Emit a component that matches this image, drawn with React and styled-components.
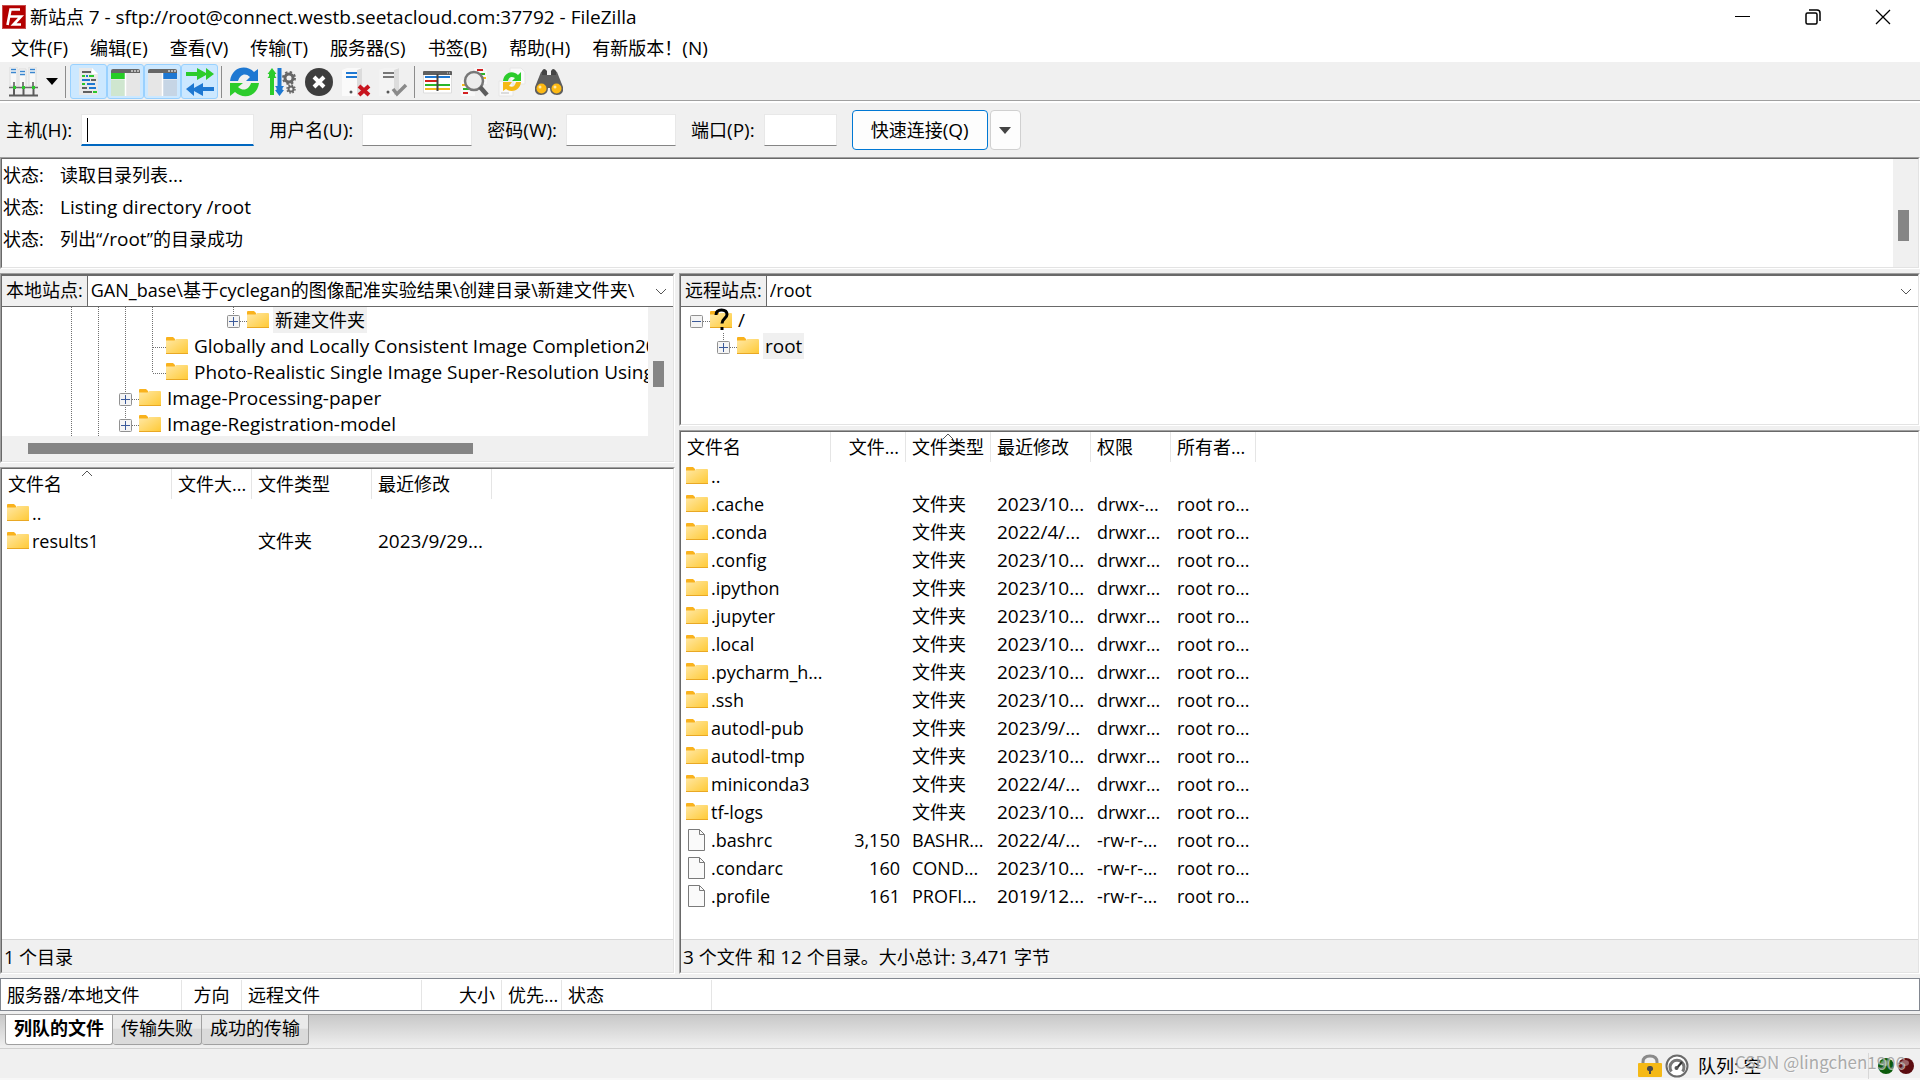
import React, { useState } from 'react';
import styled, { createGlobalStyle } from 'styled-components';

const GlobalStyle = createGlobalStyle`
  * {
    box-sizing: border-box;
  }

  body {
    margin: 0;
    background: #f0f0f0;
    color: #000;
    font-family: 'Open Sans', 'Noto Sans CJK SC', sans-serif;
    font-size: 18px;
    line-height: 26px;
  }

  button,
  input,
  select {
    margin: 0;
    padding: 0;
    border: none;
    background: none;
    color: inherit;
    font: inherit;
  }
`;

const Window = styled.div`
  display: flex;
  flex-direction: column;
  min-height: 100vh;
  overflow: hidden;
  white-space: nowrap;
`;

// Latin letters run a size larger than the Chinese around them
const Latin = styled.span`
  font-size: 19px;
  line-height: 1;
`;

/* title and menu */

const TitleBar = styled.header`
  display: flex;
  align-items: center;
  height: 34px;
  padding: 0 2px;
  background: #fff;
`;

const Title = styled.h1`
  flex: 1;
  margin: 0 0 0 4px;
  font-size: 18px;
  line-height: 26px;
  font-weight: 400;
`;

const WindowButton = styled.button`
  display: flex;
  align-items: center;
  justify-content: center;
  width: 70px;
  height: 34px;
`;

const MenuBar = styled.nav`
  display: flex;
  height: 28px;
  background: #fff;
`;

const MenuButton = styled.button`
  padding: 0 11px;
`;

/* toolbar */

const ToolBar = styled.div`
  display: flex;
  align-items: center;
  height: 41px;
  padding-left: 5px;
  border-bottom: 2px solid #fff;
  box-shadow: inset 0 -1px 0 #a0a0a0;
`;

const ToolButton = styled.button`
  display: flex;
  align-items: center;
  justify-content: center;
  width: 37px;
  height: 35px;
  border: 1px solid ${(props) => (props.$pressed ? '#99d1ff' : 'transparent')};
  border-radius: 3px;
  background: ${(props) => (props.$pressed ? '#cce8ff' : 'transparent')};
`;

const DropButton = styled.button`
  display: flex;
  align-items: center;
  justify-content: center;
  width: 20px;
  height: 35px;
`;

const ToolDivider = styled.span`
  width: 1px;
  height: 32px;
  margin: 0 4px 0 3px;
  background: #8c8c8c;
`;

/* quick connect */

const QuickConnect = styled.form`
  display: flex;
  align-items: center;
  height: 54px;
  padding-left: 6px;
`;

const Field = styled.div`
  display: flex;
  align-items: center;
  gap: 9px;
  margin-right: 15px;
`;

const TextBox = styled.input`
  width: ${(props) => props.$width}px;
  height: 32px;
  padding: 0 5px;
  border: 1px solid #e8e8e8;
  border-bottom: 1px solid #858585;
  background: #fff;
  outline: none;
`;

// The caret of the empty host box is painted as a 1px line
const HostBox = styled(TextBox)`
  border-bottom: 2px solid #0067c0;
  caret-color: transparent;

  &:placeholder-shown {
    background: linear-gradient(#000, #000) 5px center / 1px 24px no-repeat #fff;
  }
`;

const ConnectButton = styled.button`
  width: 136px;
  height: 40px;
  border: 1px solid #0078d4;
  border-radius: 4px;
  background: #fdfdfd;
`;

const HistoryButton = styled.button`
  display: flex;
  align-items: center;
  justify-content: center;
  width: 31px;
  height: 40px;
  margin-left: 2px;
  border: 1px solid #d0d0d0;
  border-radius: 4px;
  background: #fdfdfd;
`;

/* sunken frame that holds each pane */

const Frame = styled.section`
  display: flex;
  flex-direction: column;
  flex: ${(props) => (props.$height ? 'none' : '1')};
  height: ${(props) => (props.$height ? `${props.$height}px` : 'auto')};
  min-width: 0;
  border: 1px solid;
  border-color: #a0a0a0 #fff #fff #a0a0a0;
`;

const FrameInner = styled.div`
  display: flex;
  flex-direction: column;
  flex: 1;
  min-width: 0;
  min-height: 0;
  border: 1px solid;
  border-color: #696969 #e3e3e3 #e3e3e3 #696969;
  background: #fff;
`;

const ScrollRow = styled.div`
  display: flex;
  flex: 1;
  min-height: 0;
`;

const VerticalTrack = styled.div`
  display: flex;
  justify-content: center;
  flex: none;
  width: 25px;
  padding-top: ${(props) => props.$top}px;
  padding-right: 4px;
  background: #f0f0f0;
`;

const VerticalThumb = styled.div`
  width: 11px;
  height: ${(props) => props.$size}px;
  background: #858585;
`;

const HorizontalTrack = styled.div`
  display: flex;
  align-items: center;
  height: 25px;
  padding-left: 26px;
  background: #f0f0f0;
`;

const HorizontalThumb = styled.div`
  width: 69%;
  height: 11px;
  background: #858585;
`;

const LogList = styled.ul`
  flex: 1;
  margin: 0;
  padding: 0 0 0 1px;
  list-style: none;
`;

const LogLine = styled.li`
  display: grid;
  grid-template-columns: 57px 1fr;
  line-height: 32px;
`;

/* panes */

const Panes = styled.main`
  display: grid;
  grid-template-columns: 675fr 1241fr;
  gap: 4px;
  flex: 1;
  padding: 4px 0;
`;

const Pane = styled.div`
  display: flex;
  flex-direction: column;
  gap: 4px;
  min-width: 0;
`;

const SiteBar = styled.div`
  position: relative;
  display: flex;
  height: 32px;
  border-top: 1px solid #696969;
  border-bottom: 1px solid #696969;
`;

const SiteLabel = styled.label`
  padding: 0 4px;
  border-right: 1px solid #696969;
  background: #f0f0f0;
  line-height: 28px;
`;

const SiteSelect = styled.select`
  flex: 1;
  min-width: 0;
  padding: 0 28px 2px 3px;
  appearance: none;
  outline: none;
`;

const Chevron = styled.svg`
  position: absolute;
  right: 6px;
  top: 12px;
  pointer-events: none;
`;

const Tree = styled.ul`
  flex: 1;
  min-width: 0;
  margin: 0;
  padding: 0 0 0 ${(props) => props.$indent}px;
  overflow: hidden;
  list-style: none;
`;

const TreeRow = styled.li`
  display: flex;
  align-items: center;
  height: 26px;

  svg {
    flex: none;
  }
`;

const TreeName = styled.span`
  margin-left: 4px;
  padding: 0 2px;
  background: ${(props) => (props.$selected ? '#f0f0f0' : 'transparent')};
`;

const ListArea = styled.div`
  flex: 1;
`;

const FileTable = styled.table`
  border-collapse: separate;
  border-spacing: 0;
  table-layout: fixed;
  width: ${(props) => props.$width}px;
`;

const HeadCell = styled.th`
  position: relative;
  height: 30px;
  padding: 0 6px;
  border-right: 1px solid #e5e5e5;
  font-weight: 400;
  text-align: ${(props) => props.$align || 'left'};
`;

const SortMark = styled.svg`
  position: absolute;
  left: 50%;
  top: 1px;
  margin-left: -6px;
`;

const Cell = styled.td`
  height: 28px;
  padding: 0 6px;
  overflow: hidden;
  text-align: ${(props) => props.$align || 'left'};
`;

const NameCell = styled.td`
  height: 28px;
  padding: 0 0 0 5px;
`;

const FileName = styled.div`
  display: flex;
  align-items: center;
  gap: 3px;
`;

const PaneStatus = styled.footer`
  height: 33px;
  padding-left: 2px;
  border-top: 1px solid #d7d7d7;
  background: #f0f0f0;
  line-height: 34px;
`;

/* queue */

const Queue = styled.section`
  height: 33px;
  padding-top: 1px;
  border: 1px solid #828790;
  background: #fff;
`;

const Tabs = styled.div`
  display: flex;
  align-items: flex-start;
  height: 35px;
  margin-top: 3px;
  padding-left: 5px;
  border-top: 1px solid #a0a0a0;
  border-bottom: 1px solid #d0d0d0;
  background: linear-gradient(#c8c8c8, #f0f0f0);
`;

const Tab = styled.button`
  height: 30px;
  padding: 0 8px 4px;
  border: 1px solid #a0a0a0;
  border-top: none;
  border-left: ${(props) => (props.$active ? '1px solid #a0a0a0' : 'none')};
  border-radius: 0 0 3px 3px;
  background: ${(props) => (props.$active ? '#fff' : 'linear-gradient(#eaeaea 45%, #dadada 50%)')};
  font-weight: ${(props) => (props.$active ? 700 : 400)};
`;

const StatusBar = styled.footer`
  position: relative;
  display: flex;
  align-items: center;
  justify-content: flex-end;
  gap: 3px;
  height: 31px;
  padding: 4px 6px 0 0;
  border-bottom: 2px solid #f7f7f7;
`;

const QueueText = styled.span`
  width: 171px;
  margin-left: 6px;
  border-right: 1px solid #d7d7d7;
`;

const Lights = styled.span`
  display: flex;
  gap: 4px;
  margin-left: 6px;
`;

const Watermark = styled.span`
  position: absolute;
  right: 15px;
  top: 0;
  color: rgba(150, 150, 150, 0.8);
  font-family: 'Noto Sans CJK SC', sans-serif;
  font-size: 17px;
  text-shadow: 1px 1px 0 rgba(255, 255, 255, 0.6);
`;

/* icons */

const FileZillaLogo = () => (
  <svg width="24" height="24" viewBox="0 0 24 24">
    <rect width="24" height="24" fill="#b30000" />
    <rect x="0.5" y="0.5" width="23" height="23" fill="none" stroke="#fff" strokeOpacity="0.6" strokeDasharray="1 1" />
    <path d="M5.500 20 8.500 4.500H18M7.500 11.500h5M12 11.500h7l-7.500 8H19" fill="none" stroke="#fff" strokeWidth="2.600" />
  </svg>
);

const FolderIcon = ({ unknown }) => (
  <svg width="22" height="26" viewBox="0 0 22 26">
    <defs>
      <linearGradient id="folder" x1="0" y1="0" x2="1" y2="1">
        <stop offset="0" stopColor="#ffe8a6" />
        <stop offset="1" stopColor="#ffc933" />
      </linearGradient>
    </defs>
    <path d="M0 5q0-1 1-1h6l2 2v3H0z" fill="#f9b21d" />
    <path d="M0 7.500h8.500L10 6h11q1 0 1 1v14H0z" fill="url(#folder)" />
    <path d="M0 20.500h22" stroke="#e9a824" />
    {unknown && (
      <g>
        <path d="M6 8q0-5 5.500-5T17 7.500c0 4-5 4-5 9" fill="none" stroke="#000" strokeWidth="3" />
        <path d="M10.500 20h3v3h-3z" />
      </g>
    )}
  </svg>
);

const FileIcon = () => (
  <svg width="22" height="26" viewBox="0 0 22 26">
    <path d="M2.500 2.500h11l5 5v16h-16z" fill="#fafafa" stroke="#7a7a7a" />
    <path d="M13.500 2.500v5h5" fill="none" stroke="#7a7a7a" />
  </svg>
);

// One 27px step of the tree: blank, line, tee, elbow, plus, plusLast, minus
const Guide = ({ kind }) => {
  const box = kind === 'plus' || kind === 'plusLast' || kind === 'minus';
  const down = kind === 'line' || kind === 'tee' || kind === 'plus';
  return (
    <svg width="27" height="26" viewBox="0 0 27 26">
      {kind !== 'blank' && (
        <g stroke="#707070" strokeDasharray="1 1" fill="none">
          {kind !== 'minus' && <path d={down ? 'M13.500 0v26' : 'M13.500 0v14'} />}
          {kind !== 'line' && <path d="M14 14.500h13" />}
        </g>
      )}
      {box && (
        <g>
          <rect x="7.500" y="8.500" width="12" height="12" rx="1" fill="#f4f4f4" stroke="#919191" />
          <path d={kind === 'minus' ? 'M9 14.500h9' : 'M9 14.500h9M13.500 10v9'} stroke="#3b5a9a" />
        </g>
      )}
    </svg>
  );
};

const SitesIcon = () => (
  <svg width="30" height="30" viewBox="0 0 30 30">
    {[1, 10, 20].map((x, i) => (
      <g key={x}>
        <path d={`M${x} ${i === 1 ? 2 : 0}h7v19h-7z`} fill="#f8f8f8" stroke="#dcdcdc" />
        <path d={`M${x + 1} ${i === 1 ? 4.5 : 2.5}h5M${x + 1} ${i === 1 ? 7.5 : 5.5}h5`} stroke="#3a86cf" strokeWidth="1.500" />
        <path d={`M${x + 4} 15v5`} stroke="#555" strokeWidth="1.500" />
      </g>
    ))}
    <path d="M0 20.500h29" stroke="#6b6b6b" strokeWidth="1.500" />
    <path d="M4 20.500h3M13 20.500h3M23 20.500h3" stroke="#2bc72b" strokeWidth="3" />
    <path d="M0 28.500h29M5 22v6M14.500 22v6M24.500 22v6" stroke="#5c5c5c" strokeWidth="2" />
  </svg>
);

const LogIcon = () => (
  <svg width="29" height="29" viewBox="0 0 29 29">
    <path d="M5 1h13l6 6v21H5z" fill="#e9e9e9" />
    <path d="M18 1v6h6z" fill="#fff" />
    <g strokeWidth="2" fill="none">
      <path d="M8 5h9M17 13h5M8 21h5M9 25h9" stroke="#606060" />
      <path d="M8 9h3M15 9h5M8 17h3" stroke="#2bc72b" />
      <path d="M12 9h2M8 13h8M13 17h8M15 21h7" stroke="#1e78d2" />
      <path d="M19 25h4" stroke="#2bc72b" />
    </g>
  </svg>
);

const PaneIcon = ({ side }) => (
  <svg width="30" height="28" viewBox="0 0 30 28">
    <path d="M0 1h29v27H0z" fill="#e6e6e6" />
    <path d="M0 5V3q0-2 2-2h25q2 0 2 2v2z" fill="#666" />
    <path d="M20 3h2M23 3h2M26 3h2" stroke="#d5d5d5" strokeWidth="1.500" />
    {side === 'left' ? (
      <g>
        <path d="M0 5h14v6H0z" fill="#26cc26" />
        <path d="M0 12h14v16H0z" fill="#cfe6cf" />
      </g>
    ) : (
      <g>
        <path d="M15 5h14v6H15z" fill="#1e78d2" />
        <path d="M15 12h14v16H15z" fill="#c6d5e5" />
      </g>
    )}
    <path d="M14.500 5v23" stroke="#fff" strokeWidth="1.500" />
  </svg>
);

const TransferIcon = () => (
  <svg width="30" height="30" viewBox="0 0 30 30">
    <path d="M1 5h11V1l9 5V1l8 6-8 6V8l-9 5V9H1z" fill="#2ccc2c" />
    <path d="M29 20H18v-4l-9 5v-5l-8 6 8 7v-5l9 5v-5h11z" fill="#1e78d2" />
  </svg>
);

const RefreshIcon = () => (
  <svg width="31" height="30" viewBox="0 0 31 30">
    <path d="M1 14C3-1 18-3 25 5l4-3v12H17l4-4C16 5 11 8 9 14z" fill="#1e78d2" />
    <path d="M30 16c-2 15-17 16-24 9l-5 4V16h13l-5 4c6 5 11 2 13-4z" fill="#2ccc2c" />
  </svg>
);

const FilterIcon = () => (
  <svg width="30" height="30" viewBox="0 0 30 30">
    <path d="M5 1l4.500 6H8v2l1.500 2H7v17H3V11H.5L2 9V7H.5z" fill="#2ccc2c" />
    <path d="M12.500 29L8 23h1.500v-2L8 19h2.500V1h4v18H17l-1.500 2v2H17z" fill="#1e78d2" />
    <circle cx="22" cy="11" r="4" fill="none" stroke="#666" strokeWidth="3" />
    <circle cx="22" cy="11" r="6" fill="none" stroke="#666" strokeWidth="2" strokeDasharray="2.400 2.312" />
    <circle cx="24" cy="22" r="2.500" fill="none" stroke="#666" strokeWidth="2" />
    <circle cx="24" cy="22" r="4" fill="none" stroke="#666" strokeWidth="1.500" strokeDasharray="1.600 1.542" />
  </svg>
);

const CancelIcon = () => (
  <svg width="30" height="30" viewBox="0 0 30 30">
    <circle cx="15" cy="15" r="14" fill="#3e3e3e" />
    <path d="M10 10l10 10M20 10L10 20" stroke="#fff" strokeWidth="4" />
  </svg>
);

const ServerIcon = ({ mark }) => (
  <svg width="30" height="30" viewBox="0 0 30 30">
    <path d="M15 3l6-2v24l-6 4z" fill="#dcdcdc" />
    <path d="M1 3l5-2h15l-5 2v26H1z" fill={mark === 'cross' ? '#fafafa' : '#f3f3f3'} />
    <path d="M5 6h11M5 10h11" stroke={mark === 'cross' ? '#1e78d2' : '#777'} strokeWidth="2" />
    <circle cx="10" cy="25" r="1.500" fill="#555" />
    {mark === 'cross' ? (
      <path d="M18 19l10 9M28 19l-10 9" stroke="#c8141e" strokeWidth="4" />
    ) : (
      <path d="M15 22l4 5 9-9" fill="none" stroke="#8a8a8a" strokeWidth="3.500" />
    )}
  </svg>
);

const CompareIcon = () => (
  <svg width="29" height="28" viewBox="0 0 29 28">
    <path d="M0.500 5h28v20h-28z" fill="#fff" stroke="#ddd" />
    <path d="M0 7V4q0-1 1-1h27q1 0 1 1v3z" fill="#606060" />
    <path d="M24 5h1M26 5h1" stroke="#d5d5d5" />
    <g strokeWidth="2">
      <path d="M2 9h25" stroke="#1e78d2" />
      <path d="M2 13h12" stroke="#d42020" />
      <path d="M2 17h25" stroke="#2bb52b" />
      <path d="M2 21h25" stroke="#f4b81c" />
    </g>
    <path d="M14.500 6v17" stroke="#444" strokeWidth="2" />
  </svg>
);

const SearchFilesIcon = () => (
  <svg width="30" height="30" viewBox="0 0 30 30">
    <path d="M14 1h10l3 3v13H14zM1 13h14v16H1z" fill="#f8f8f8" />
    <g strokeWidth="2">
      <path d="M17 3h6M3 26h5" stroke="#d42020" />
      <path d="M20 7h5M3 22h6" stroke="#2bb52b" />
      <path d="M22 11h4M2 18h5" stroke="#f4b81c" />
    </g>
    <circle cx="14" cy="14" r="9" fill="#ececec" stroke="#777" strokeWidth="2.500" />
    <path d="M20 20l7 8" stroke="#5c5c5c" strokeWidth="4.500" />
  </svg>
);

const SyncIcon = () => (
  <svg width="28" height="30" viewBox="0 0 28 30">
    <path d="M12 1h11l4 4v12H12zM1 14h14v15H1z" fill="#fafafa" stroke="#e6e6e6" />
    <path d="M3 26h8" stroke="#dcdcdc" strokeWidth="2" />
    <path d="M5 14C6 5 15 3 20 8l3-3v9h-9l3-3c-4-2-6-1-7 3z" fill="#2ccc2c" />
    <path d="M23 15c-1 9-10 11-15 7l-3 2v-9h9l-3 4c4 2 6 0 7-4z" fill="#f5b916" />
  </svg>
);

const BinocularsIcon = () => (
  <svg width="30" height="28" viewBox="0 0 30 28">
    <path d="M7 4q3-3 5 0l1 3h4l1-3q2-3 5 0l6 15q1 8-6 8-7 0-7-7h-2q0 7-7 7-7 0-6-8z" fill="#5e5e5e" />
    <path d="M8 3q2-4 5 0v4H8zM17 3q2-4 5 0v4h-5z" fill="#444" />
    <circle cx="7.500" cy="20.500" r="5" fill="#fdb913" />
    <circle cx="22.500" cy="20.500" r="5" fill="#fdb913" />
    <circle cx="6" cy="19" r="1.500" fill="#ffe9a8" />
    <circle cx="21" cy="19" r="1.500" fill="#ffe9a8" />
  </svg>
);

const Triangle = ({ color }) => (
  <svg width="12" height="7" viewBox="0 0 12 7">
    <path d="M0 0h12L6 7z" fill={color} />
  </svg>
);

const LockIcon = () => (
  <svg width="24" height="24" viewBox="0 0 24 24">
    <path d="M5 11V8q0-6 7-6t7 6v3" fill="none" stroke="#8a8a8a" strokeWidth="3" />
    <rect y="9" width="24" height="14" rx="1" fill="#f5b916" />
    <path d="M12 12a2.500 2.500 0 0 1 1 5v3h-2v-3a2.500 2.500 0 0 1 1-5z" fill="#4a4a4a" />
  </svg>
);

const GaugeIcon = () => (
  <svg width="24" height="24" viewBox="0 0 24 24">
    <circle cx="12" cy="12" r="10.500" fill="#fff" stroke="#6a6a6a" strokeWidth="2" />
    <path d="M6.500 17.500a7 7 0 1 1 11 0" fill="none" stroke="#777" strokeWidth="3" />
    <path d="M11 15l6-7" stroke="#333" strokeWidth="2" />
    <circle cx="11.500" cy="14" r="2" fill="#555" />
  </svg>
);

const Light = ({ color, shine }) => (
  <svg width="16" height="16" viewBox="0 0 16 16">
    <circle cx="8" cy="8" r="8" fill={color} />
    <ellipse cx="7" cy="5" rx="4" ry="3" fill={shine} />
  </svg>
);

/* data */

const menus = ['文件(F)', '编辑(E)', '查看(V)', '传输(T)', '服务器(S)', '书签(B)', '帮助(H)', '有新版本！(N)'];

const logLines = ['读取目录列表...', 'Listing directory /root', '列出“/root”的目录成功'];

const localTree = [
  { guides: ['line', 'line', 'line', 'line', 'blank', 'blank', 'plusLast'], name: '新建文件夹', selected: true },
  { guides: ['line', 'line', 'line', 'tee'], name: 'Globally and Locally Consistent Image Completion20' },
  { guides: ['line', 'line', 'line', 'elbow'], name: 'Photo-Realistic Single Image Super-Resolution Using' },
  { guides: ['line', 'line', 'plus'], name: 'Image-Processing-paper' },
  { guides: ['line', 'line', 'plusLast'], name: 'Image-Registration-model' },
];

const remoteTree = [
  { guides: ['minus'], name: '/', unknown: true },
  { guides: ['blank', 'plusLast'], name: 'root', selected: true },
];

const localColumns = [
  { label: '文件名', width: 170, sorted: true },
  { label: '文件大...', width: 80, align: 'right' },
  { label: '文件类型', width: 120 },
  { label: '最近修改', width: 120 },
];

const localFiles = [['..'], ['results1', '', '文件夹', '2023/9/29...']];

const remoteColumns = [
  { label: '文件名', width: 150 },
  { label: '文件...', width: 75, align: 'right' },
  { label: '文件类型', width: 85, sorted: true },
  { label: '最近修改', width: 100 },
  { label: '权限', width: 80 },
  { label: '所有者...', width: 85 },
];

const remoteFiles = [
  ['..'],
  ['.cache', '', '文件夹', '2023/10...', 'drwx-...', 'root ro...'],
  ['.conda', '', '文件夹', '2022/4/...', 'drwxr...', 'root ro...'],
  ['.config', '', '文件夹', '2023/10...', 'drwxr...', 'root ro...'],
  ['.ipython', '', '文件夹', '2023/10...', 'drwxr...', 'root ro...'],
  ['.jupyter', '', '文件夹', '2023/10...', 'drwxr...', 'root ro...'],
  ['.local', '', '文件夹', '2023/10...', 'drwxr...', 'root ro...'],
  ['.pycharm_h...', '', '文件夹', '2023/10...', 'drwxr...', 'root ro...'],
  ['.ssh', '', '文件夹', '2023/10...', 'drwxr...', 'root ro...'],
  ['autodl-pub', '', '文件夹', '2023/9/...', 'drwxr...', 'root ro...'],
  ['autodl-tmp', '', '文件夹', '2023/10...', 'drwxr...', 'root ro...'],
  ['miniconda3', '', '文件夹', '2022/4/...', 'drwxr...', 'root ro...'],
  ['tf-logs', '', '文件夹', '2023/10...', 'drwxr...', 'root ro...'],
  ['.bashrc', '3,150', 'BASHR...', '2022/4/...', '-rw-r-...', 'root ro...'],
  ['.condarc', '160', 'COND...', '2023/10...', '-rw-r-...', 'root ro...'],
  ['.profile', '161', 'PROFI...', '2019/12...', '-rw-r-...', 'root ro...'],
];

const queueColumns = [
  { label: '服务器/本地文件', width: 181 },
  { label: '方向', width: 60, align: 'center' },
  { label: '远程文件', width: 180 },
  { label: '大小', width: 80, align: 'right' },
  { label: '优先...', width: 60 },
  { label: '状态', width: 150 },
];

const tabs = ['列队的文件', '传输失败', '成功的传输'];

/* parts */

const Mixed = ({ text }) =>
  text
    .split(/([\x21-\x7e][\x20-\x7e]*)/)
    .map((part, i) => (i % 2 ? <Latin key={i}>{part}</Latin> : part));

const FileList = ({ columns, files = [] }) => (
  <FileTable $width={columns.reduce((sum, column) => sum + column.width, 0)}>
    <colgroup>
      {columns.map((column) => (
        <col key={column.label} width={column.width} />
      ))}
    </colgroup>
    <thead>
      <tr>
        {columns.map((column) => (
          <HeadCell key={column.label} $align={column.align}>
            {column.label}
            {column.sorted && (
              <SortMark width="12" height="7" viewBox="0 0 12 7">
                <path d="M1 6l5-5 5 5" fill="none" stroke="#555" />
              </SortMark>
            )}
          </HeadCell>
        ))}
      </tr>
    </thead>
    <tbody>
      {files.map((file) => (
        <tr key={file[0]}>
          <NameCell>
            <FileName>
              {file[1] ? <FileIcon /> : <FolderIcon />}
              {file[0]}
            </FileName>
          </NameCell>
          {columns.slice(1).map((column, i) => (
            <Cell key={column.label} $align={column.align}>
              {column.label === '最近修改' ? <Mixed text={file[i + 1] || ''} /> : file[i + 1]}
            </Cell>
          ))}
        </tr>
      ))}
    </tbody>
  </FileTable>
);

const DirectoryTree = ({ rows, indent }) => (
  <Tree $indent={indent}>
    {rows.map((row) => (
      <TreeRow key={row.name}>
        {row.guides.map((kind, i) => (
          <Guide key={i} kind={kind} />
        ))}
        <FolderIcon unknown={row.unknown} />
        <TreeName $selected={row.selected}>
          <Mixed text={row.name} />
        </TreeName>
      </TreeRow>
    ))}
  </Tree>
);

const SitePath = ({ id, label, path }) => (
  <SiteBar>
    <SiteLabel htmlFor={id}>{label}</SiteLabel>
    <SiteSelect id={id}>
      <option>{path}</option>
    </SiteSelect>
    <Chevron width="12" height="8" viewBox="0 0 12 8">
      <path d="M1 1l5 5 5-5" fill="none" stroke="#555" />
    </Chevron>
  </SiteBar>
);

const App = () => {
  const [activeTab, setActiveTab] = useState(tabs[0]);

  return (
    <Window>
      <GlobalStyle />
      <TitleBar>
        <FileZillaLogo />
        <Title>
          <Mixed text="新站点 7 - sftp://root@connect.westb.seetacloud.com:37792 - FileZilla" />
        </Title>
        <WindowButton aria-label="Minimize">
          <svg width="16" height="16" viewBox="0 0 16 16">
            <path d="M0 7.500h15" stroke="#000" />
          </svg>
        </WindowButton>
        <WindowButton aria-label="Restore">
          <svg width="16" height="16" viewBox="0 0 16 16" fill="none" stroke="#000" strokeWidth="1.500">
            <rect x="1" y="4" width="11" height="11" rx="1.500" />
            <path d="M4 1h8q3 0 3 3v8" />
          </svg>
        </WindowButton>
        <WindowButton aria-label="Close">
          <svg width="16" height="16" viewBox="0 0 16 16">
            <path d="M1 1l14 14M15 1L1 15" stroke="#000" strokeWidth="1.300" />
          </svg>
        </WindowButton>
      </TitleBar>

      <MenuBar>
        {menus.map((menu) => (
          <MenuButton key={menu}>
            <Mixed text={menu} />
          </MenuButton>
        ))}
      </MenuBar>

      <ToolBar>
        <ToolButton aria-label="Site manager"><SitesIcon /></ToolButton>
        <DropButton aria-label="Sites"><Triangle color="#000" /></DropButton>
        <ToolDivider />
        <ToolButton $pressed aria-label="Message log"><LogIcon /></ToolButton>
        <ToolButton $pressed aria-label="Local tree"><PaneIcon side="left" /></ToolButton>
        <ToolButton $pressed aria-label="Remote tree"><PaneIcon side="right" /></ToolButton>
        <ToolButton $pressed aria-label="Transfer queue"><TransferIcon /></ToolButton>
        <ToolDivider />
        <ToolButton aria-label="Refresh"><RefreshIcon /></ToolButton>
        <ToolButton aria-label="Process queue"><FilterIcon /></ToolButton>
        <ToolButton aria-label="Cancel"><CancelIcon /></ToolButton>
        <ToolButton aria-label="Disconnect"><ServerIcon mark="cross" /></ToolButton>
        <ToolButton aria-label="Reconnect"><ServerIcon mark="check" /></ToolButton>
        <ToolDivider />
        <ToolButton aria-label="Compare"><CompareIcon /></ToolButton>
        <ToolButton aria-label="Filter"><SearchFilesIcon /></ToolButton>
        <ToolButton aria-label="Synchronize"><SyncIcon /></ToolButton>
        <ToolButton aria-label="Find"><BinocularsIcon /></ToolButton>
      </ToolBar>

      <QuickConnect onSubmit={(event) => event.preventDefault()}>
        <Field>
          <label htmlFor="host"><Mixed text="主机(H):" /></label>
          <HostBox id="host" placeholder=" " $width={173} autoFocus />
        </Field>
        <Field>
          <label htmlFor="user"><Mixed text="用户名(U):" /></label>
          <TextBox id="user" $width={110} />
        </Field>
        <Field>
          <label htmlFor="password"><Mixed text="密码(W):" /></label>
          <TextBox id="password" type="password" $width={110} />
        </Field>
        <Field>
          <label htmlFor="port"><Mixed text="端口(P):" /></label>
          <TextBox id="port" $width={73} />
        </Field>
        <ConnectButton><Mixed text="快速连接(Q)" /></ConnectButton>
        <HistoryButton type="button" aria-label="History"><Triangle color="#444" /></HistoryButton>
      </QuickConnect>

      <Frame $height={112}>
        <FrameInner>
          <ScrollRow>
            <LogList>
              {logLines.map((line) => (
                <LogLine key={line}>
                  <span>状态:</span>
                  <span><Mixed text={line} /></span>
                </LogLine>
              ))}
            </LogList>
            <VerticalTrack $top={51}>
              <VerticalThumb $size={31} />
            </VerticalTrack>
          </ScrollRow>
        </FrameInner>
      </Frame>

      <Panes>
        <Pane>
          <Frame $height={190}>
            <FrameInner>
              <SitePath
                id="local"
                label="本地站点:"
                path={'GAN_base\\基于cyclegan的图像配准实验结果\\创建目录\\新建文件夹\\'}
              />
              <ScrollRow>
                <DirectoryTree rows={localTree} indent={56} />
                <VerticalTrack $top={54}>
                  <VerticalThumb $size={26} />
                </VerticalTrack>
              </ScrollRow>
              <HorizontalTrack>
                <HorizontalThumb />
              </HorizontalTrack>
            </FrameInner>
          </Frame>
          <Frame>
            <FrameInner>
              <ListArea>
                <FileList columns={localColumns} files={localFiles} />
              </ListArea>
              <PaneStatus>1 个目录</PaneStatus>
            </FrameInner>
          </Frame>
        </Pane>

        <Pane>
          <Frame $height={153}>
            <FrameInner>
              <SitePath id="remote" label="远程站点:" path="/root" />
              <DirectoryTree rows={remoteTree} indent={2} />
            </FrameInner>
          </Frame>
          <Frame>
            <FrameInner>
              <ListArea>
                <FileList columns={remoteColumns} files={remoteFiles} />
              </ListArea>
              <PaneStatus>
                <Mixed text="3 个文件 和 12 个目录。大小总计: 3,471 字节" />
              </PaneStatus>
            </FrameInner>
          </Frame>
        </Pane>
      </Panes>

      <Queue>
        <FileList columns={queueColumns} />
      </Queue>
      <Tabs>
        {tabs.map((tab) => (
          <Tab key={tab} $active={tab === activeTab} onClick={() => setActiveTab(tab)}>
            {tab}
          </Tab>
        ))}
      </Tabs>
      <StatusBar>
        <LockIcon />
        <GaugeIcon />
        <QueueText>队列: 空</QueueText>
        <Lights>
          <Light color="#0c5c0c" shine="#5f9a5f" />
          <Light color="#5c0c10" shine="#9a6468" />
        </Lights>
        <Watermark>CSDN @lingchen1906</Watermark>
      </StatusBar>
    </Window>
  );
};

export default App;
